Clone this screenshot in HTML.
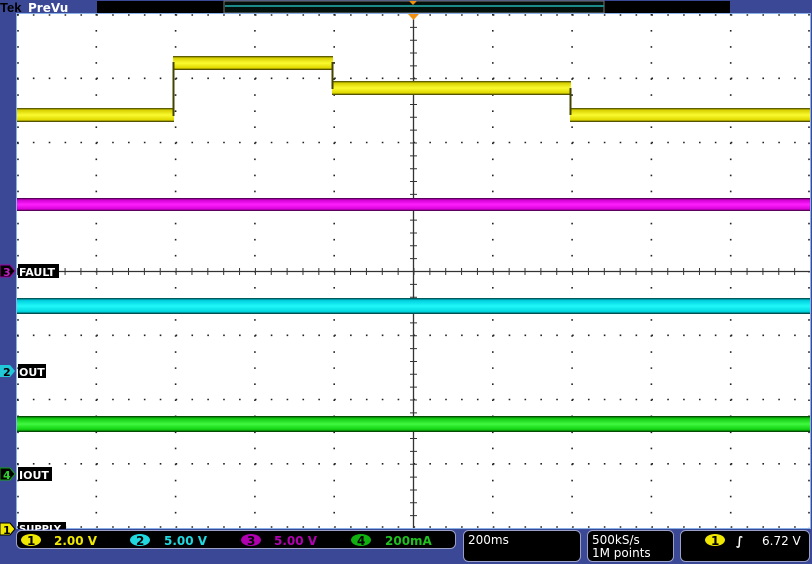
<!DOCTYPE html>
<html><head><meta charset="utf-8"><style>
html,body{margin:0;padding:0;background:#3a4896;}
body{width:812px;height:564px;position:relative;overflow:hidden;font-family:"Liberation Sans",sans-serif;}
.t{font-family:"DejaVu Sans","Liberation Sans",sans-serif;font-weight:bold;}
</style></head><body>
<svg width="812" height="564" viewBox="0 0 812 564" xmlns="http://www.w3.org/2000/svg" style="position:absolute;left:0;top:0">
<defs>
<linearGradient id="gy" x1="0" y1="0" x2="0" y2="1">
<stop offset="0" stop-color="#3a3a00"/><stop offset="0.15" stop-color="#d8d000"/><stop offset="0.5" stop-color="#fafa30"/><stop offset="0.85" stop-color="#e0d800"/><stop offset="1" stop-color="#2a2a00"/></linearGradient>
<linearGradient id="gm" x1="0" y1="0" x2="0" y2="1">
<stop offset="0" stop-color="#300030"/><stop offset="0.15" stop-color="#d000d0"/><stop offset="0.5" stop-color="#ff20ff"/><stop offset="0.85" stop-color="#d800d8"/><stop offset="1" stop-color="#300030"/></linearGradient>
<linearGradient id="gc" x1="0" y1="0" x2="0" y2="1">
<stop offset="0" stop-color="#003a3a"/><stop offset="0.15" stop-color="#00d0e0"/><stop offset="0.5" stop-color="#20f8f8"/><stop offset="0.85" stop-color="#00d8e0"/><stop offset="1" stop-color="#002a2a"/></linearGradient>
<linearGradient id="gg" x1="0" y1="0" x2="0" y2="1">
<stop offset="0" stop-color="#003000"/><stop offset="0.15" stop-color="#10c810"/><stop offset="0.5" stop-color="#40f840"/><stop offset="0.85" stop-color="#10d010"/><stop offset="1" stop-color="#002a00"/></linearGradient>
</defs>
<text x="0" y="12" font-family="Liberation Sans" font-size="13" fill="#000" font-weight="bold">Tek</text>
<text x="28" y="12" class="t" font-size="12" fill="#fff" font-weight="normal">PreVu</text>
<rect x="97" y="1" width="633" height="12" fill="#000"/>
<rect x="224" y="1" width="380" height="12" fill="#04100c" stroke="#777" stroke-width="1"/>
<rect x="225" y="5" width="379" height="2" fill="#1c8a88"/>
<polygon points="409,1 417,1 413,5" fill="#f09010"/>
<rect x="16.5" y="13.5" width="794" height="515" fill="#fff" stroke="#8ab0e8" stroke-width="1"/>
<g stroke="#222" stroke-width="1.6" fill="none">
<g stroke-dasharray="1.6 14.46">
<line x1="96.3" y1="14" x2="96.3" y2="528"/><line x1="175.6" y1="14" x2="175.6" y2="528"/><line x1="254.9" y1="14" x2="254.9" y2="528"/><line x1="334.2" y1="14" x2="334.2" y2="528"/><line x1="492.8" y1="14" x2="492.8" y2="528"/><line x1="572.1" y1="14" x2="572.1" y2="528"/><line x1="651.4" y1="14" x2="651.4" y2="528"/><line x1="730.7" y1="14" x2="730.7" y2="528"/><line x1="809" y1="14" x2="809" y2="528"/><line x1="18" y1="14" x2="18" y2="528"/>
</g>
<g stroke-dasharray="1.6 14.26">
<line x1="17" y1="15" x2="810" y2="15"/><line x1="17" y1="78.3" x2="810" y2="78.3"/><line x1="17" y1="142.5" x2="810" y2="142.5"/><line x1="17" y1="206.8" x2="810" y2="206.8"/><line x1="17" y1="335.3" x2="810" y2="335.3"/><line x1="17" y1="399.5" x2="810" y2="399.5"/><line x1="17" y1="463.8" x2="810" y2="463.8"/><line x1="17" y1="527" x2="810" y2="527"/>
</g>
</g>
<g stroke="#333" stroke-width="1.3">
<line x1="17" y1="271.5" x2="810" y2="271.5"/><line x1="413.5" y1="14" x2="413.5" y2="528"/>
</g>
<g stroke="#333" stroke-width="1" stroke-dasharray="1 14.86">
<line x1="17" y1="271.5" x2="810" y2="271.5" stroke-width="7"/>
<line x1="413.5" y1="14" x2="413.5" y2="528" stroke-width="7" stroke-dasharray="1 11.85"/>
</g>
<polygon points="408,14 419,14 413.5,20" fill="#f09010"/>
<rect x="17" y="108" width="157" height="14" fill="url(#gy)"/>
<rect x="173" y="56" width="160" height="14" fill="url(#gy)"/>
<rect x="332" y="81" width="239" height="14" fill="url(#gy)"/>
<rect x="570" y="108" width="240" height="14" fill="url(#gy)"/>
<rect x="172.5" y="62" width="2" height="54" fill="#444400"/>
<rect x="331.5" y="62" width="2" height="27" fill="#444400"/>
<rect x="569.5" y="88" width="2" height="27" fill="#444400"/>
<rect x="17" y="198" width="793" height="13" fill="url(#gm)"/>
<rect x="17" y="298" width="793" height="16" fill="url(#gc)"/>
<rect x="17" y="416" width="793" height="16" fill="url(#gg)"/>
<g class="t" font-size="11">
<polygon points="0,265 10,265 15,271 10,277 0,277" fill="#000" stroke="#a000a0"/>
<text x="3" y="276" fill="#c020c0">3</text>
<rect x="18" y="264" width="41" height="14" fill="#000"/><text x="19" y="276" fill="#fff">FAULT</text>
<polygon points="0,365 10,365 15,371 10,377 0,377" fill="#20c8d8"/>
<text x="3" y="376" fill="#000">2</text>
<rect x="18" y="364" width="28" height="14" fill="#000"/><text x="19" y="376" fill="#fff">OUT</text>
<polygon points="0,468 10,468 15,474 10,480 0,480" fill="#000" stroke="#10a010"/>
<text x="3" y="479" fill="#30d030">4</text>
<rect x="18" y="467" width="34" height="14" fill="#000"/><text x="19" y="479" fill="#fff">IOUT</text>
<polygon points="0,523 10,523 15,529 10,535 0,535" fill="#f0e800" stroke="#000"/>
<text x="3" y="534" fill="#000">1</text>
<rect x="18" y="522" width="48" height="7" fill="#000"/><text x="19" y="532" fill="#fff" font-size="10">SUPPLY</text>
</g>
<rect x="16.5" y="530.5" width="439" height="18" rx="5" fill="#000" stroke="#9aa0c8"/>
<rect x="463.5" y="530.5" width="117" height="31" rx="5" fill="#000" stroke="#9aa0c8"/>
<rect x="587.5" y="530.5" width="86" height="31" rx="5" fill="#000" stroke="#9aa0c8"/>
<rect x="680.5" y="530.5" width="129" height="31" rx="5" fill="#000" stroke="#9aa0c8"/>
<g class="t" font-size="12">
<ellipse cx="31" cy="540" rx="10" ry="6" fill="#f0e800"/><text x="27" y="545" fill="#000">1</text>
<text x="54" y="545" fill="#f0e800">2.00 V</text>
<ellipse cx="140" cy="540" rx="10" ry="6" fill="#20d8e0"/><text x="136" y="545" fill="#000">2</text>
<text x="164" y="545" fill="#20d8e0">5.00 V</text>
<ellipse cx="251" cy="540" rx="10" ry="6" fill="#b000b0"/><text x="247" y="545" fill="#000">3</text>
<text x="274" y="545" fill="#b000b0">5.00 V</text>
<ellipse cx="361" cy="540" rx="10" ry="6" fill="#10b010"/><text x="357" y="545" fill="#000">4</text>
<text x="385" y="545" fill="#20c020">200mA</text>
<text x="468" y="544" fill="#fff" font-weight="normal">200ms</text>
<text x="592" y="544" fill="#fff" font-weight="normal">500kS/s</text>
<text x="592" y="557" fill="#fff" font-weight="normal">1M points</text>
<ellipse cx="715" cy="540" rx="10" ry="6" fill="#f0e800"/><text x="711" y="545" fill="#000">1</text>
<text x="736" y="545" fill="#fff">∫</text>
<text x="762" y="545" fill="#fff" font-weight="normal">6.72 V</text>
</g>
</svg>
</body></html>
